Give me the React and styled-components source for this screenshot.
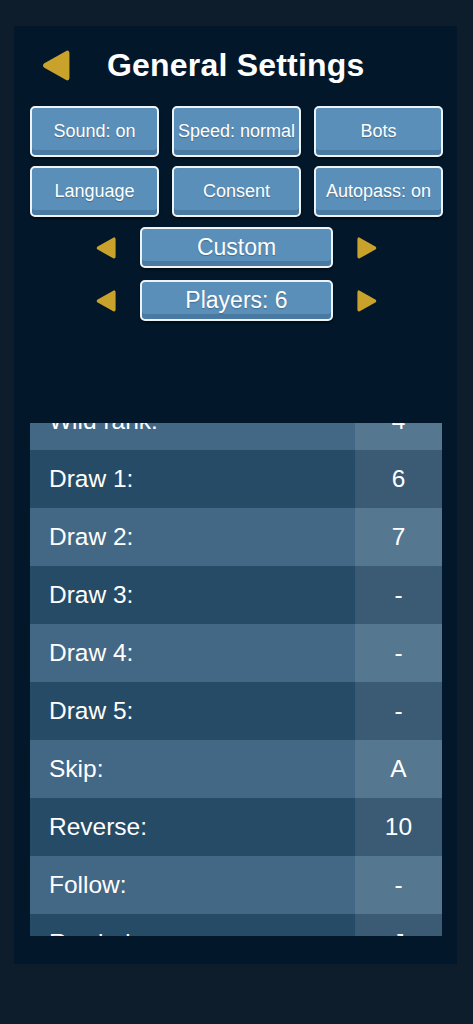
import React, { useEffect, useRef } from "react";
import styled, { createGlobalStyle } from "styled-components";

const GlobalStyle = createGlobalStyle`
  html, body {
    margin: 0;
    padding: 0;
    background: #0e1d2b;
    font-family: "Liberation Sans", Arial, sans-serif;
  }
`;

const Page = styled.div`
  width: 473px;
  height: 1024px;
  padding: 26px 16px 60px 14px;
  box-sizing: border-box;
`;

const Panel = styled.div`
  background: #02182a;
  height: 938px;
  box-sizing: border-box;
  padding: 22px 14px 28px 16px;
  display: flex;
  flex-direction: column;
`;

const Header = styled.div`
  display: flex;
  align-items: center;
  height: 34px;
  padding-left: 12px;
  margin-bottom: 24px;
`;

const Title = styled.h1`
  margin: 0 0 0 37px;
  color: #fff;
  font-size: 32px;
  font-weight: bold;
  letter-spacing: 0.2px;
`;

const ButtonGrid = styled.div`
  display: grid;
  grid-template-columns: repeat(3, 129px);
  grid-auto-rows: 51px;
  column-gap: 13px;
  row-gap: 9px;
  margin-bottom: 10px;
`;

const Button = styled.button`
  box-sizing: border-box;
  border: 2px solid #eef3f7;
  border-radius: 5px;
  background: #5a8fb9;
  box-shadow: inset 0 -5px 0 #4a7aa1, 0 2px 2px rgba(0, 0, 0, 0.5);
  color: #fff;
  font-family: "Liberation Sans", Arial, sans-serif;
  font-size: ${(p) => p.$size || 18}px;
  padding: 0;
  white-space: nowrap;
  width: ${(p) => (p.$wide ? "193px" : "100%")};
  height: ${(p) => (p.$wide ? "41px" : "100%")};
  text-shadow: 0 1px 1px rgba(0, 0, 0, 0.25);
  cursor: pointer;
`;

const Selector = styled.div`
  display: flex;
  align-items: center;
  justify-content: center;
  gap: 24px;
  margin-top: ${(p) => p.$gap || 0}px;
`;

const ArrowBtn = styled.span`
  display: flex;
  width: ${(p) => p.$w}px;
  height: ${(p) => p.$h}px;
`;

const Table = styled.div`
  margin-top: 102px;
  height: 513px;
  overflow-y: auto;
  scrollbar-width: none;
  &::-webkit-scrollbar {
    display: none;
  }
`;

const Row = styled.div`
  display: grid;
  grid-template-columns: 325px 87px;
  height: 58px;
  color: #fff;
  font-size: 24.5px;
`;

const Label = styled.div`
  display: flex;
  align-items: center;
  padding-left: 19px;
  background: ${(p) => (p.$light ? "#436886" : "#264b67")};
`;

const Value = styled.div`
  display: flex;
  align-items: center;
  justify-content: center;
  background: ${(p) => (p.$light ? "#55778f" : "#3b5b74")};
`;

function Arrow({ dir = "left", w, h }) {
  const pts = dir === "left" ? "90,10 90,90 12,50" : "10,10 10,90 88,50";
  return (
    <ArrowBtn $w={w} $h={h}>
      <svg width="100%" height="100%" viewBox="0 0 100 100" preserveAspectRatio="none">
        <polygon
          points={pts}
          fill="#c9a22c"
          stroke="#c9a22c"
          strokeWidth="16"
          strokeLinejoin="round"
        />
      </svg>
    </ArrowBtn>
  );
}

const rows = [
  ["Wild rank:", "4"],
  ["Draw 1:", "6"],
  ["Draw 2:", "7"],
  ["Draw 3:", "-"],
  ["Draw 4:", "-"],
  ["Draw 5:", "-"],
  ["Skip:", "A"],
  ["Reverse:", "10"],
  ["Follow:", "-"],
  ["Rewind:", "J"],
  ["Bomb:", "-"],
];

const buttons = ["Sound: on", "Speed: normal", "Bots", "Language", "Consent", "Autopass: on"];

export default function App() {
  const tableRef = useRef(null);

  useEffect(() => {
    if (tableRef.current) tableRef.current.scrollTop = 31;
  }, []);

  return (
    <Page>
      <GlobalStyle />
      <Panel>
        <Header>
          <Arrow dir="left" w={28} h={31} />
          <Title>General Settings</Title>
        </Header>
        <ButtonGrid>
          {buttons.map((b) => (
            <Button key={b}>{b}</Button>
          ))}
        </ButtonGrid>
        <Selector>
          <Arrow dir="left" w={20} h={22} />
          <Button $wide $size={23}>Custom</Button>
          <Arrow dir="right" w={20} h={22} />
        </Selector>
        <Selector $gap={12}>
          <Arrow dir="left" w={20} h={22} />
          <Button $wide $size={23}>Players: 6</Button>
          <Arrow dir="right" w={20} h={22} />
        </Selector>
        <Table ref={tableRef}>
          {rows.map(([label, value], i) => (
            <Row key={label}>
              <Label $light={i % 2 === 0}>{label}</Label>
              <Value $light={i % 2 === 0}>{value}</Value>
            </Row>
          ))}
        </Table>
      </Panel>
    </Page>
  );
}
